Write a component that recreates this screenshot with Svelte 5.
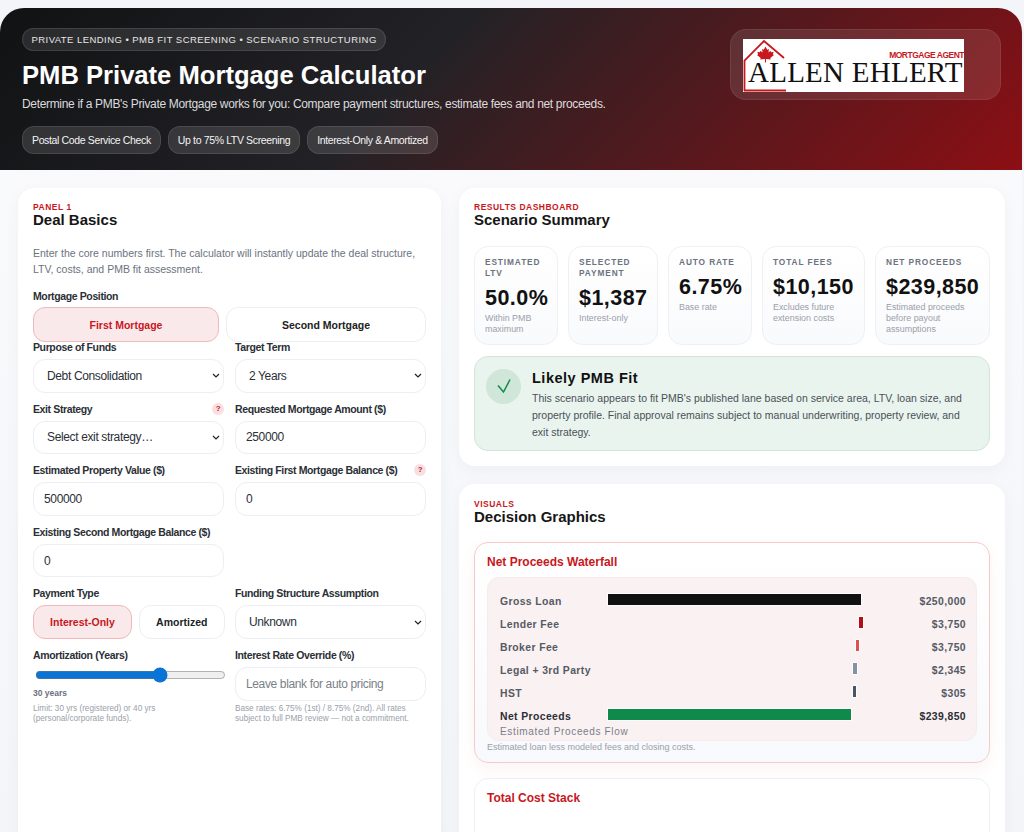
<script>
  const chips = ['Postal Code Service Check', 'Up to 75% LTV Screening', 'Interest-Only & Amortized'];
  const stats = [
    { l: 'Estimated LTV', v: '50.0%', n: 'Within PMB maximum' },
    { l: 'Selected Payment', v: '$1,387', n: 'Interest-only' },
    { l: 'Auto Rate', v: '6.75%', n: 'Base rate' },
    { l: 'Total Fees', v: '$10,150', n: 'Excludes future extension costs' },
    { l: 'Net Proceeds', v: '$239,850', n: 'Estimated proceeds before payout assumptions' }
  ];
  const rows = [
    { l: 'Gross Loan', x: 0, w: 253, c: '#111111', v: '$250,000' },
    { l: 'Lender Fee', x: 251, w: 3.500, c: '#b30f14', v: '$3,750' },
    { l: 'Broker Fee', x: 247.500, w: 3.800, c: '#d9534f', v: '$3,750' },
    { l: 'Legal + 3rd Party', x: 245, w: 3.800, c: '#8492a6', v: '$2,345' },
    { l: 'HST', x: 244.500, w: 3.800, c: '#4b5563', v: '$305' },
    { l: 'Net Proceeds', x: 0, w: 243, c: '#0f8a4b', v: '$239,850', strong: true }
  ];
</script>

<div class="shell">
  <header class="hero">
    <div class="hero-copy">
      <div class="eyebrow">PRIVATE LENDING • PMB FIT SCREENING • SCENARIO STRUCTURING</div>
      <h1>PMB Private Mortgage Calculator</h1>
      <p>Determine if a PMB's Private Mortgage works for you: Compare payment structures, estimate fees and net proceeds.</p>
      <div class="chips">
        {#each chips as c}<span class="chip">{c}</span>{/each}
      </div>
    </div>
    <div class="logo-card">
      <div class="logo">
        <svg class="house" viewBox="0 0 60 53" aria-hidden="true">
          <path d="M1.500 52V21.500L21 2L41 19" fill="none" stroke="#c8171d" stroke-width="1.800"/>
          <path d="M1 51.500H43" stroke="#c8171d" stroke-width="2"/>
          <path d="M22.500 7.500L24.200 10.800L26 9.900L25.400 13.600L27.500 11.800L28.100 13.200L30.600 12.800L29.900 15.400L31 16L27.300 19L27.700 20.500L23 20V23.600H22V20L17.300 20.500L17.700 19L14 16L15.100 15.400L14.400 12.800L16.900 13.200L17.500 11.800L19.600 13.600L19 9.900L20.800 10.800Z" fill="#c8171d"/>
        </svg>
        <span class="agent">MORTGAGE AGENT</span>
        <span class="name">ALLEN EHLERT</span>
      </div>
    </div>
  </header>

  <main class="layout">
    <section class="panel left">
      <div class="kicker">PANEL 1</div>
      <h2>Deal Basics</h2>
      <p class="intro">Enter the core numbers first. The calculator will instantly update the deal structure, LTV, costs, and PMB fit assessment.</p>

      <div class="label solo">Mortgage Position</div>
      <div class="toggle position">
        <button class="tog on">First Mortgage</button>
        <button class="tog">Second Mortgage</button>
      </div>

      <div class="form">
        <div class="field">
          <div class="label">Purpose of Funds</div>
          <select><option>Debt Consolidation</option></select>
        </div>
        <div class="field">
          <div class="label">Target Term</div>
          <select><option>2 Years</option></select>
        </div>
        <div class="field">
          <div class="label">Exit Strategy <span class="q">?</span></div>
          <select><option>Select exit strategy…</option></select>
        </div>
        <div class="field">
          <div class="label">Requested Mortgage Amount ($)</div>
          <input value="250000" />
        </div>
        <div class="field">
          <div class="label">Estimated Property Value ($)</div>
          <input value="500000" />
        </div>
        <div class="field">
          <div class="label">Existing First Mortgage Balance ($) <span class="q">?</span></div>
          <input value="0" />
        </div>
        <div class="field">
          <div class="label">Existing Second Mortgage Balance ($)</div>
          <input value="0" />
        </div>
        <div class="field"></div>
        <div class="field">
          <div class="label">Payment Type</div>
          <div class="toggle pay">
            <button class="tog on">Interest-Only</button>
            <button class="tog">Amortized</button>
          </div>
        </div>
        <div class="field">
          <div class="label">Funding Structure Assumption</div>
          <select><option>Unknown</option></select>
        </div>
        <div class="field">
          <div class="label">Amortization (Years)</div>
          <input class="range" type="range" min="10" max="40" value="30" />
          <div class="years">30 years</div>
          <div class="hint limit">Limit: 30 yrs (registered) or 40 yrs<br />(personal/corporate funds).</div>
        </div>
        <div class="field">
          <div class="label">Interest Rate Override (%)</div>
          <input placeholder="Leave blank for auto pricing" />
          <div class="hint">Base rates: 6.75% (1st) / 8.75% (2nd). All rates subject to full PMB review — not a commitment.</div>
        </div>
      </div>
    </section>

    <div class="right">
      <section class="panel">
        <div class="kicker">RESULTS DASHBOARD</div>
        <h2>Scenario Summary</h2>
        <div class="stats">
          {#each stats as s}
            <div class="stat">
              <div class="stat-l">{s.l}</div>
              <div class="stat-v">{s.v}</div>
              <div class="stat-n">{s.n}</div>
            </div>
          {/each}
        </div>
        <div class="fit">
          <div class="fit-icon">
            <svg viewBox="0 0 35 35" width="35" height="35" aria-hidden="true">
              <path d="M12 16.500L17.500 23L24 10.500" fill="none" stroke="#0f8a4b" stroke-width="1.500"/>
            </svg>
          </div>
          <div>
            <h3>Likely PMB Fit</h3>
            <p>This scenario appears to fit PMB's published lane based on service area, LTV, loan size, and property profile. Final approval remains subject to manual underwriting, property review, and exit strategy.</p>
          </div>
        </div>
      </section>

      <section class="panel visuals">
        <div class="kicker">VISUALS</div>
        <h2>Decision Graphics</h2>
        <div class="chart-card accent">
          <h4>Net Proceeds Waterfall</h4>
          <div class="waterfall">
            {#each rows as r}
              <div class="wf-row" class:strong={r.strong}>
                <span class="wf-l">{r.l}</span>
                <span class="wf-track"><span class="wf-bar" style="margin-left:{r.x}px;width:{r.w}px;background:{r.c}"></span></span>
                <span class="wf-v">{r.v}</span>
              </div>
            {/each}
            <div class="wf-title">Estimated Proceeds Flow</div>
          </div>
          <div class="caption">Estimated loan less modeled fees and closing costs.</div>
        </div>
        <div class="chart-card stack">
          <h4>Total Cost Stack</h4>
        </div>
      </section>
    </div>
  </main>
</div>

<style>
  :global(body) { margin: 0; background: #f3f5f8; }
  .shell {
    width: 1022px; height: 824px; margin-top: 8px; overflow: hidden;
    font-family: "Liberation Sans", Arial, sans-serif; color: #111;
    background: linear-gradient(180deg, #fbfbfd 0%, #f3f5f8 100%);
    border-radius: 24px 24px 0 0;
  }
  .hero {
    height: 162px; box-sizing: border-box; padding: 20px 21px 0 22px;
    display: flex; justify-content: space-between; align-items: flex-start;
    background: linear-gradient(135deg, #111214 0%, #222226 40%, #8c0f14 100%);
    color: #fff;
  }
  .eyebrow {
    display: inline-block; height: 23px; line-height: 22px; box-sizing: border-box;
    padding: 0 8.500px; border-radius: 999px; font-size: 9.500px; letter-spacing: .45px;
    background: rgba(255,255,255,.1); border: 1px solid rgba(255,255,255,.1); color: #e6e6e6;
  }
  h1 { margin: 9px 0 0; font-size: 25.600px; line-height: 30px; font-weight: 700; }
  .hero-copy p { margin: 6px 0 0; font-size: 12px; letter-spacing: -.33px; line-height: 16px; color: rgba(255,255,255,.85); }
  .chips { display: flex; gap: 7px; margin-top: 14px; }
  .chip {
    height: 28px; line-height: 26px; box-sizing: border-box; padding: 0 9px; font-size: 10.500px; letter-spacing: -.36px;
    border-radius: 12px; background: rgba(255,255,255,.12); border: 1px solid rgba(255,255,255,.1); color: #f3f3f3;
  }
  .logo-card {
    margin-top: 1px; width: 271px; height: 71px; box-sizing: border-box; padding: 9px 37px 9px 12px;
    border-radius: 16px; background: rgba(255,255,255,.1); border: 1px solid rgba(255,255,255,.08);
  }
  .logo { position: relative; width: 221px; height: 53px; background: #fff; color: #111; overflow: hidden; }
  .house { position: absolute; left: 0; top: 0; width: 60px; height: 53px; }
  .agent { position: absolute; right: 0; top: 11px; font-size: 8.500px; font-weight: 700; color: #c8171d; letter-spacing: -.5px; line-height: 10px; }
  .name { position: absolute; left: 5px; top: 22px; font-family: "Liberation Serif", serif; font-size: 29px; line-height: 22px; white-space: nowrap; letter-spacing: .25px; }

  .layout { display: grid; grid-template-columns: 423px 546px; gap: 18px; padding: 18px 0 0 18px; align-items: start; }
  .right { display: flex; flex-direction: column; gap: 18px; }
  .panel { background: #fff; border-radius: 16px; padding: 14px 15px 15px; box-shadow: 0 4px 16px rgba(20,25,40,.04); }
  .left { height: 700px; }
  .kicker { font-size: 8.500px; line-height: 8px; margin-top: 1px; font-weight: 700; letter-spacing: .5px; color: #c8171d; }
  h2 { margin: 0; font-size: 15px; line-height: 18px; font-weight: 700; color: #161616; }
  .intro { margin: 16px 0 0; font-size: 10.500px; line-height: 16px; color: #6b7280; }
  .label { display: flex; justify-content: space-between; align-items: center; font-size: 10.500px; letter-spacing: -.38px; line-height: 12px; height: 12px; font-weight: 700; color: #2b2f36; margin-bottom: 6px; }
  .solo { margin-top: 13px; margin-bottom: 5px; }
  .q { width: 12px; height: 12px; border-radius: 50%; background: #f8dfe1; color: #c8171d; font-size: 8px; font-weight: 700; text-align: center; line-height: 12px; letter-spacing: 0; }
  .toggle { display: flex; gap: 7px; }
  .tog {
    flex: 1 1 auto; height: 35px; box-sizing: border-box; border: 1px solid #eceef3; border-radius: 12px; background: #fff;
    font: 700 10.500px "Liberation Sans", sans-serif; color: #222; padding: 0;
  }
  .tog.on { background: #f9e9ea; border-color: #efb9bc; color: #c8171d; }
  .position { margin-bottom: -1px; }
  .position .tog:first-child { width: 186px; flex: none; }
  .position .tog:last-child { width: 200px; flex: none; }
  .pay .tog { height: 34px; }
  .pay .tog:first-child { width: 99px; flex: none; }
  .pay .tog:last-child { width: 85.500px; flex: none; }
  .form { display: grid; grid-template-columns: 191.300px 191.300px; column-gap: 10.700px; row-gap: 10px; }
  select, input:not(.range) {
    width: 100%; height: 33.600px; box-sizing: border-box; border: 1px solid #eceef3; border-radius: 12px; background: #fff;
    font: 12px "Liberation Sans", sans-serif; letter-spacing: -.36px; color: #2b2f36; padding: 0 10px; margin: 0; display: block; outline: none;
  }
  select {
    appearance: none; padding: 0 13px;
    background: #fff url("data:image/svg+xml,%3Csvg xmlns='http://www.w3.org/2000/svg' width='8' height='5'%3E%3Cpath d='M1 1l3 3 3-3' fill='none' stroke='%23222' stroke-width='1.200'/%3E%3C/svg%3E") no-repeat right 3px center;
  }
  input::placeholder { color: #7a7f88; }
  .range { width: 191px; margin: 7px 0 0 2px; display: block; accent-color: #0a74d6; height: 14px; }
  .years { font-size: 8.500px; font-weight: 700; color: #6b7280; margin-top: 5px; line-height: 12px; }
  .hint { font-size: 8.200px; line-height: 10px; color: #9aa0aa; margin-top: 3px; }
  .hint.limit { margin-top: 5px; }

  .stats { display: grid; grid-template-columns: 84px 90px 84px 103px 115px; column-gap: 10px; margin-top: 17px; }
  .stat { height: 99px; box-sizing: border-box; padding: 10px; border: 1px solid #eff0f4; border-radius: 14px; background: linear-gradient(180deg, #fff, #f9fafc); }
  .stat-l { font-size: 8.300px; line-height: 11px; font-weight: 700; letter-spacing: .9px; text-transform: uppercase; color: #6b7280; }
  .stat-v { font-size: 21.500px; line-height: 22px; font-weight: 700; letter-spacing: .45px; color: #111; margin-top: 8px; white-space: nowrap; }
  .stat-n { font-size: 8.900px; line-height: 11px; color: #9aa0aa; margin-top: 4px; }
  .fit { margin-top: 11px; display: flex; gap: 11px; height: 95px; box-sizing: border-box; padding: 12px 11px; border: 1px solid #cfe6d9; border-radius: 14px; background: #e9f4ee; }
  .fit-icon { flex: none; width: 35px; height: 35px; border-radius: 50%; background: #cfe6d9; }
  .fit-icon svg { display: block; }
  h3 { margin: 2px 0 0; font-size: 14.500px; line-height: 15px; font-weight: 700; letter-spacing: .5px; color: #111; }
  .fit p { margin: 4px 0 0; font-size: 10.500px; line-height: 17px; color: #4b5057; }

  .visuals { height: 340px; padding-top: 15px; }
  .chart-card { margin-top: 15px; border: 1px solid #eff0f4; border-radius: 14px; padding: 12px; background: #fff; }
  .chart-card.accent { margin-top: 16px; border-color: #f6c9cb; box-shadow: 0 6px 18px rgba(200,23,29,.05); background: linear-gradient(180deg, #fff, #f8f9fc); height: 221px; box-sizing: border-box; }
  .chart-card.stack { height: 200px; box-sizing: border-box; }
  h4 { margin: 0; font-size: 12px; line-height: 14px; font-weight: 700; color: #c8171d; }
  .waterfall { margin-top: 8px; height: 164px; box-sizing: border-box; padding: 13px 10px 0 12px; border-radius: 12px; background: #faf1f2; border: 1px solid #f7eced; }
  .wf-row { display: flex; height: 23px; align-items: flex-start; font-size: 10.400px; letter-spacing: .4px; font-weight: 700; color: #555a63; }
  .wf-row.strong { color: #2b2f36; }
  .wf-l { width: 108px; line-height: 22px; flex: none; }
  .wf-track { width: 253px; flex: none; display: block; padding-top: 3px; }
  .wf-bar { display: block; height: 11px; outline: 1px solid rgba(255,255,255,.8); }
  .wf-v { flex: 1; text-align: right; line-height: 22px; letter-spacing: .4px; }
  .wf-title { font-size: 10px; line-height: 12px; color: #7a7f88; letter-spacing: .65px; margin-top: -3px; }
  .caption { font-size: 9px; line-height: 12px; color: #9aa0aa; margin-top: 0; }
</style>
